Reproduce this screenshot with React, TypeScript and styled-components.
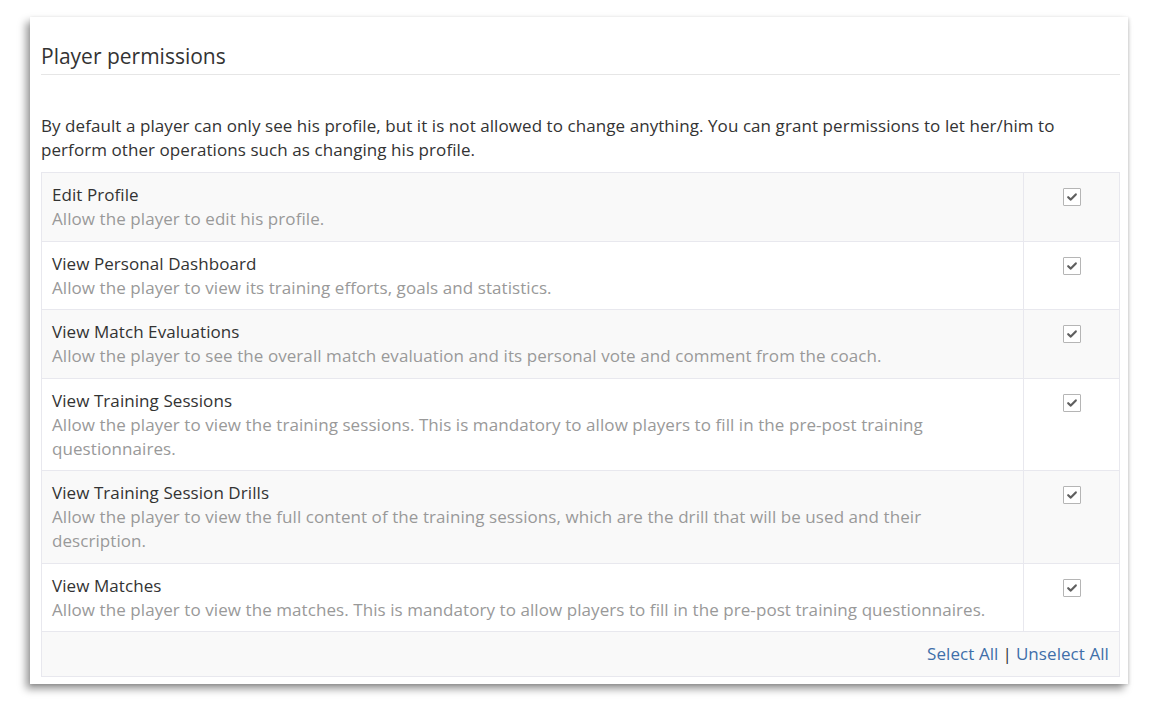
import React from "react";
import styled, { createGlobalStyle } from "styled-components";

const GlobalStyle = createGlobalStyle`
  html, body {
    margin: 0;
    padding: 0;
    background: #ffffff;
  }
  body {
    font-family: "Open Sans", "Noto Sans", Arial, sans-serif;
    color: #333333;
  }
`;

const Page = styled.div`
  padding: 17px 30px 19px 30px;
`;

const Card = styled.div`
  width: 1098px;
  box-sizing: border-box;
  background: #ffffff;
  padding: 22px 8px 7px 11px;
  box-shadow: -4px 5px 8px rgba(0, 0, 0, 0.4), 1px 1px 3px rgba(0, 0, 0, 0.15);
`;

const Title = styled.h2`
  margin: 0;
  font-size: 21px;
  font-weight: 400;
  line-height: 34px;
  padding-bottom: 1px;
  color: #333333;
  border-bottom: 1px solid #e6e6e6;
`;

const Intro = styled.p`
  margin: 39px 0 10px 0;
  font-size: 17px;
  line-height: 24px;
  letter-spacing: 0.07px;
  color: #333333;
`;

const Table = styled.table`
  width: 100%;
  border-collapse: collapse;
  border: 1px solid #e8e8ee;
`;

const Row = styled.tr<{ $striped: boolean }>`
  background: ${(p) => (p.$striped ? "#f9f9f9" : "#ffffff")};
`;

const TextCell = styled.td`
  padding: 10px 10px 9.5px 10px;
  border: 1px solid #e8e8ee;
  vertical-align: top;
`;

const CheckCell = styled.td`
  width: 95px;
  padding: 13px 0 0 0;
  border: 1px solid #e8e8ee;
  vertical-align: top;
  text-align: center;
`;

const PermName = styled.div`
  font-size: 17px;
  line-height: 24px;
  letter-spacing: 0.07px;
  color: #333333;
`;

const PermDesc = styled.div`
  font-size: 17px;
  line-height: 24px;
  letter-spacing: 0.07px;
  color: #999999;
`;

const Box = styled.span`
  display: inline-flex;
  align-items: center;
  justify-content: center;
  width: 16px;
  height: 16px;
  border: 1px solid #b5b5b5;
  background: #ffffff;
  border-radius: 1px;
`;

const FooterCell = styled.td`
  padding: 10px 10px 10px 10px;
  border: 1px solid #e8e8ee;
  text-align: right;
  font-size: 17px;
  line-height: 24px;
  letter-spacing: 0.07px;
  color: #333333;
`;

const Link = styled.a`
  color: #3f6fa9;
  text-decoration: none;
  cursor: pointer;
`;

const Sep = styled.span`
  margin: 0 4px;
  color: #333333;
`;

const permissions = [
  {
    name: "Edit Profile",
    desc: "Allow the player to edit his profile.",
  },
  {
    name: "View Personal Dashboard",
    desc: "Allow the player to view its training efforts, goals and statistics.",
  },
  {
    name: "View Match Evaluations",
    desc: "Allow the player to see the overall match evaluation and its personal vote and comment from the coach.",
  },
  {
    name: "View Training Sessions",
    desc: "Allow the player to view the training sessions. This is mandatory to allow players to fill in the pre-post training questionnaires.",
  },
  {
    name: "View Training Session Drills",
    desc: "Allow the player to view the full content of the training sessions, which are the drill that will be used and their description.",
  },
  {
    name: "View Matches",
    desc: "Allow the player to view the matches. This is mandatory to allow players to fill in the pre-post training questionnaires.",
  },
];

const Check = () => (
  <Box>
    <svg width="12" height="12" viewBox="0 0 12 12">
      <path
        d="M2.2 6.2 L4.8 8.6 L9.8 3.4"
        fill="none"
        stroke="#5f5f5f"
        strokeWidth="2.2"
        strokeLinecap="round"
        strokeLinejoin="round"
      />
    </svg>
  </Box>
);

const App: React.FC = () => {
  return (
    <Page>
      <GlobalStyle />
      <Card>
        <Title>Player permissions</Title>
        <Intro>
          By default a player can only see his profile, but it is not allowed to
          change anything. You can grant permissions to let her/him to perform
          other operations such as changing his profile.
        </Intro>
        <Table>
          <tbody>
            {permissions.map((perm, i) => (
              <Row key={perm.name} $striped={i % 2 === 0}>
                <TextCell>
                  <PermName>{perm.name}</PermName>
                  <PermDesc>{perm.desc}</PermDesc>
                </TextCell>
                <CheckCell>
                  <Check />
                </CheckCell>
              </Row>
            ))}
            <Row $striped>
              <FooterCell colSpan={2}>
                <Link>Select All</Link>
                <Sep>|</Sep>
                <Link>Unselect All</Link>
              </FooterCell>
            </Row>
          </tbody>
        </Table>
      </Card>
    </Page>
  );
};

export default App;
